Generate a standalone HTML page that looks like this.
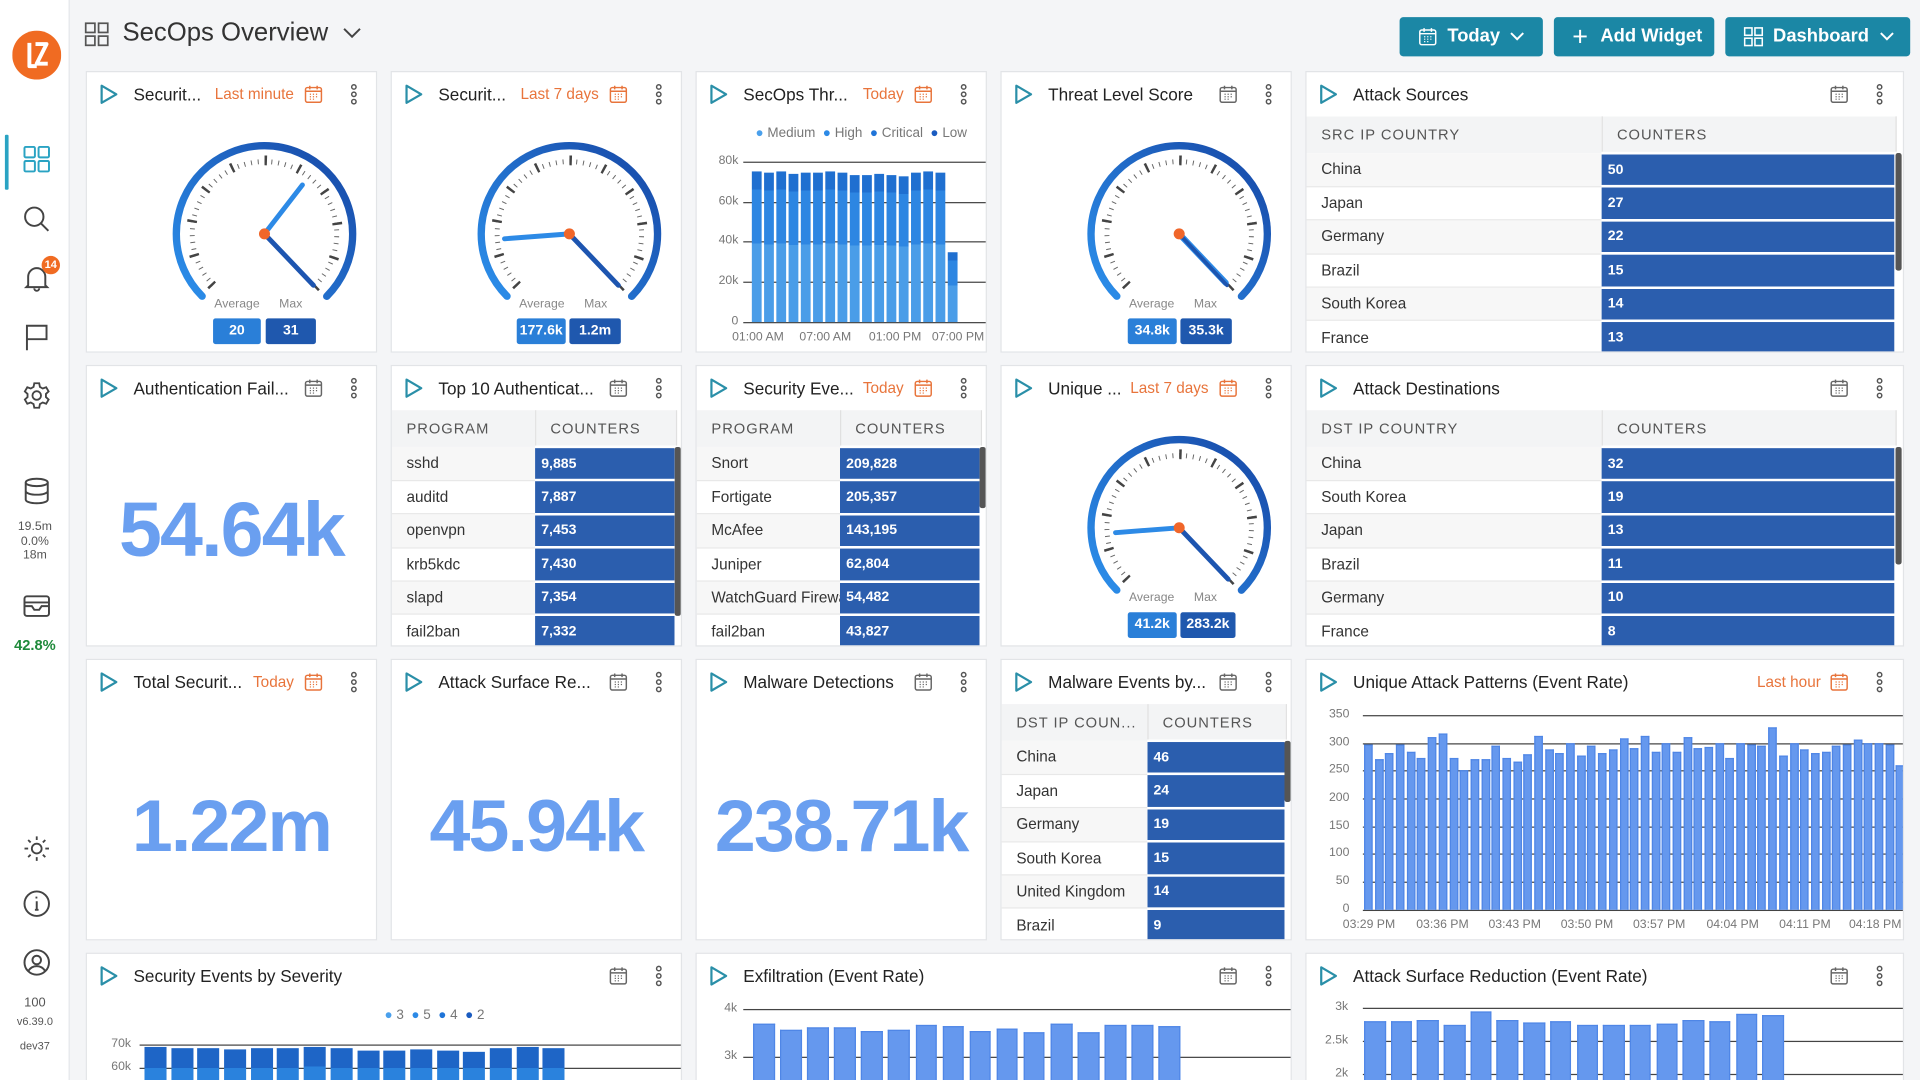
<!DOCTYPE html>
<html><head><meta charset="utf-8">
<style>
*{box-sizing:border-box;margin:0;padding:0}
html,body{width:1920px;height:1080px;overflow:hidden;background:#f4f5f7;font-family:"Liberation Sans",Arial,sans-serif}
#w{position:absolute;left:0;top:0;width:1568px;height:882px;transform:scale(1.2244898);transform-origin:0 0;overflow:hidden;background:#f4f5f7}
.side{position:absolute;left:0;top:0;width:57px;height:882px;background:#fff;border-right:1px solid #e4e6e9}
.ic{position:absolute;left:18px;width:24px;height:24px}
.st{position:absolute;left:0;width:57px;text-align:center;font-size:10px;color:#555}
.card{position:absolute;background:#fff;border:1px solid #e2e4e7;overflow:hidden}
.play{position:absolute;left:10px;top:9px}
.t{position:absolute;left:38px;top:10px;font-size:14px;color:#222;white-space:nowrap}
.tm{position:absolute;top:11px;font-size:12.5px;color:#e8743b;white-space:nowrap}
.cal{position:absolute;top:10px;width:16px;height:16px}
.keb{position:absolute;top:9px;width:6px;height:18px}
.btn{position:absolute;top:14px;height:32px;background:#1b87a5;border-radius:3px;color:#fff;font-weight:bold;font-size:15px;line-height:32px}
table{border-collapse:collapse;position:absolute;left:0;top:36px;table-layout:fixed}
th{height:30px;background:#f3f4f5;color:#555;font-weight:normal;font-size:12px;letter-spacing:.8px;text-align:left;padding-left:12px;white-space:nowrap;overflow:hidden;border-right:1px solid #e0e0e0}
td{height:27.4px;font-size:12.5px;color:#333;padding-left:12px;white-space:nowrap;overflow:hidden;border-bottom:1px solid #e8e8e8}
tr:nth-child(even) td{background:#f7f7f7}
td.v{background:#2b5eae!important;color:#fff;font-weight:bold;font-size:11.5px;padding-left:5px;border:2px solid #fff;border-left:0;border-right:3px solid #fff}
.sb{position:absolute;width:5px;background:#555;border-radius:2px}
.big{position:absolute;left:0;width:100%;text-align:center;font-weight:bold;color:#6a9ff0;letter-spacing:-1.5px}
.lbl{position:absolute;font-size:10px;color:#888}
.bd{position:absolute;height:21px;line-height:21px;color:#fff;font-weight:bold;font-size:11.5px;text-align:center;border-radius:2px}
.gl{position:absolute;height:1px;background:#444}
.ax{position:absolute;font-size:10px;color:#777;text-align:right}
.bars{position:absolute;display:flex;align-items:flex-end}
.bars i{display:block;background:#6598ee;border:1px solid #4f86e6;border-bottom:0}
.sk i{background:linear-gradient(to bottom,#1f6fd0 0,#1f6fd0 12%,#2d86e2 12%,#2d86e2 48%,#4a9de8 48%);border:0}
</style></head><body><div id="w">
<svg width="0" height="0" style="position:absolute">
<defs>
<linearGradient id="ag" x1="0" x2="1" y1="0" y2="0"><stop offset="0" stop-color="#1a52b0"/><stop offset="1" stop-color="#2a8ae6"/></linearGradient>
<symbol id="play" viewBox="0 0 16 18"><path d="M2 2 L14 9 L2 16 Z" fill="none" stroke="#2a8fa8" stroke-width="1.8" stroke-linejoin="round"/></symbol>
<symbol id="calg" viewBox="0 0 16 16"><rect x="1.5" y="2.5" width="13" height="12" rx="1.5" fill="none" stroke="#666" stroke-width="1.2"/><path d="M1.5 5.5h13M5 1v3M11 1v3" stroke="#666" stroke-width="1.2"/><path d="M5 8h1M7.5 8h1M10 8h1M5 10h1M7.5 10h1M10 10h1M5 12h1M7.5 12h1" stroke="#666" stroke-width="1"/></symbol>
<symbol id="calw" viewBox="0 0 16 16"><rect x="1.5" y="2.5" width="13" height="12" rx="1.5" fill="none" stroke="#fff" stroke-width="1.2"/><path d="M1.5 5.5h13M5 1v3M11 1v3" stroke="#fff" stroke-width="1.2"/><path d="M5 8h1M7.5 8h1M10 8h1M5 10h1M7.5 10h1M10 10h1M5 12h1M7.5 12h1" stroke="#fff" stroke-width="1"/></symbol>
<symbol id="calo" viewBox="0 0 16 16"><rect x="1.5" y="2.5" width="13" height="12" rx="1.5" fill="none" stroke="#e8743b" stroke-width="1.2"/><path d="M1.5 5.5h13M5 1v3M11 1v3" stroke="#e8743b" stroke-width="1.2"/><path d="M5 8h1M7.5 8h1M10 8h1M5 10h1M7.5 10h1M10 10h1M5 12h1M7.5 12h1" stroke="#e8743b" stroke-width="1"/></symbol>
<symbol id="keb" viewBox="0 0 6 18"><circle cx="3" cy="3" r="1.8" fill="none" stroke="#555" stroke-width="1.2"/><circle cx="3" cy="9" r="1.8" fill="none" stroke="#555" stroke-width="1.2"/><circle cx="3" cy="15" r="1.8" fill="none" stroke="#555" stroke-width="1.2"/></symbol>
<g id="dial">
<circle r="72" fill="none" stroke="url(#ag)" stroke-width="6" stroke-linecap="round" stroke-dasharray="339.3 200" transform="rotate(135)"/>
<circle r="59" fill="none" stroke="#666" stroke-width="4" stroke-dasharray="0.8 4.76" transform="rotate(135)"/>
<circle r="60" fill="none" stroke="#444" stroke-width="8" stroke-dasharray="2 26.27" transform="rotate(135)"/>
<polygon points="0,0 43,47 43,80 -43,80 -43,47" fill="#fff"/>
</g>
</defs></svg>

<!-- sidebar -->
<div class="side">
<svg style="position:absolute;left:10px;top:25px" width="40" height="40" viewBox="0 0 40 40"><circle cx="20" cy="20" r="20" fill="#f06b22"/><path d="M14 10v19h6M19 11h9l-8 16h9" fill="none" stroke="#fff" stroke-width="3.2" stroke-linejoin="round"/></svg>
<div style="position:absolute;left:4px;top:110px;width:3px;height:45px;background:#2aa3c3;border-radius:1px"></div>
<svg class="ic" style="top:118px" viewBox="0 0 24 24" fill="none" stroke="#2aa3c3" stroke-width="1.6"><rect x="2" y="2" width="8.5" height="8.5" rx="1"/><rect x="13.5" y="2" width="8.5" height="8.5" rx="1"/><rect x="2" y="13.5" width="8.5" height="8.5" rx="1"/><rect x="13.5" y="13.5" width="8.5" height="8.5" rx="1"/></svg>
<svg class="ic" style="top:167px" viewBox="0 0 24 24" fill="none" stroke="#444" stroke-width="1.6"><circle cx="10" cy="10" r="7.5"/><path d="M15.5 15.5l6 6"/></svg>
<svg class="ic" style="top:215px" viewBox="0 0 24 24" fill="none" stroke="#444" stroke-width="1.6"><path d="M5 18V11a7 7 0 0 1 14 0v7l1.5 1.5h-17z M10 20.5a2 2 0 0 0 4 0"/></svg>
<div style="position:absolute;left:34px;top:209px;width:15px;height:15px;border-radius:50%;background:#f06b22;color:#fff;font-size:9px;font-weight:bold;text-align:center;line-height:15px">14</div>
<svg class="ic" style="top:263px" viewBox="0 0 24 24" fill="none" stroke="#444" stroke-width="1.6"><path d="M4 23V3h16v11H4"/></svg>
<svg class="ic" style="top:311px" viewBox="0 0 24 24" fill="none" stroke="#444" stroke-width="1.5"><circle cx="12" cy="12" r="3.5"/><path d="M10 2h4l.6 3 2.3 1.3 2.8-1 2 3.4-2.2 2v2.6l2.2 2-2 3.4-2.8-1-2.3 1.3-.6 3h-4l-.6-3-2.3-1.3-2.8 1-2-3.4 2.2-2v-2.6l-2.2-2 2-3.4 2.8 1L9.4 5z"/></svg>
<svg class="ic" style="top:389px" viewBox="0 0 24 24" fill="none" stroke="#444" stroke-width="1.6"><ellipse cx="12" cy="5" rx="9" ry="3"/><path d="M3 5v14c0 1.7 4 3 9 3s9-1.3 9-3V5M3 12c0 1.7 4 3 9 3s9-1.3 9-3"/></svg>
<div class="st" style="top:425px;line-height:11.5px">19.5m<br>0.0%<br>18m</div>
<svg class="ic" style="top:483px" viewBox="0 0 24 24" fill="none" stroke="#444" stroke-width="1.6"><rect x="2" y="4" width="20" height="16" rx="2"/><path d="M2 9h20M2 12h6l2 3h4l2-3h6"/></svg>
<div class="st" style="top:520px;font-size:12px;font-weight:bold;color:#1f8a3b">42.8%</div>
<svg class="ic" style="top:681px" viewBox="0 0 24 24" fill="none" stroke="#444" stroke-width="1.5"><circle cx="12" cy="12" r="4"/><path d="M12 2v3M12 19v3M2 12h3M19 12h3M5 5l2 2M17 17l2 2M5 19l2-2M17 7l2-2"/></svg>
<svg class="ic" style="top:726px" viewBox="0 0 24 24" fill="none" stroke="#444" stroke-width="1.6"><circle cx="12" cy="12" r="10"/><path d="M12 10v7M10.5 17h3M11 7h1.5"/></svg>
<svg class="ic" style="top:774px" viewBox="0 0 24 24" fill="none" stroke="#444" stroke-width="1.6"><circle cx="12" cy="12" r="10"/><circle cx="12" cy="10" r="3.5"/><path d="M5 19c2-3 4-4 7-4s5 1 7 4"/></svg>
<div class="st" style="top:813px;font-size:10.5px">100</div>
<div class="st" style="top:829px;font-size:9px">v6.39.0</div>
<div class="st" style="top:849px;font-size:9px">dev37</div>
</div>

<!-- header -->
<svg style="position:absolute;left:69px;top:18px" width="20" height="20" viewBox="0 0 20 20" fill="none" stroke="#555" stroke-width="1.4"><rect x="1" y="1" width="7.5" height="7.5"/><rect x="11.5" y="1" width="7.5" height="7.5"/><rect x="1" y="11.5" width="7.5" height="7.5"/><rect x="11.5" y="11.5" width="7.5" height="7.5"/></svg>
<div style="position:absolute;left:100px;top:15px;font-size:21px;color:#333">SecOps Overview</div>
<svg style="position:absolute;left:280px;top:22px" width="15" height="10" viewBox="0 0 15 10"><path d="M1 1.5l6.5 6.5 6.5-6.5" fill="none" stroke="#444" stroke-width="1.6"/></svg>

<div class="btn" style="left:1143px;width:117px"><svg style="position:absolute;left:15px;top:8px" width="16" height="16"><use href="#calw"/></svg><span style="position:absolute;left:39px">Today</span><svg style="position:absolute;left:90px;top:12px" width="12" height="8"><path d="M1 1l5 5 5-5" fill="none" stroke="#fff" stroke-width="1.6"/></svg></div>
<div class="btn" style="left:1269px;width:131px"><span style="position:absolute;left:15px;font-weight:normal;font-size:22px">+</span><span style="position:absolute;left:38px">Add Widget</span></div>
<div class="btn" style="left:1409px;width:151px"><svg style="position:absolute;left:15px;top:8px" width="16" height="16" viewBox="0 0 20 20" fill="none" stroke="#fff" stroke-width="1.6"><rect x="1" y="1" width="7.5" height="7.5"/><rect x="11.5" y="1" width="7.5" height="7.5"/><rect x="1" y="11.5" width="7.5" height="7.5"/><rect x="11.5" y="11.5" width="7.5" height="7.5"/></svg><span style="position:absolute;left:39px">Dashboard</span><svg style="position:absolute;left:126px;top:12px" width="12" height="8"><path d="M1 1l5 5 5-5" fill="none" stroke="#fff" stroke-width="1.6"/></svg></div>

<!-- ROW 1 -->
<div class="card" style="left:70px;top:58px;width:238px;height:230px">
<svg class="play" width="16" height="18"><use href="#play"/></svg><span class="t">Securit...</span><span class="tm" style="right:67px">Last minute</span>
<svg class="cal" style="right:43px"><use href="#calo"/></svg><svg class="keb" style="right:15px"><use href="#keb"/></svg>
<svg style="position:absolute;left:65px;top:52px" width="160" height="160" viewBox="-80 -80 160 160"><use href="#dial"/><line x1="0" y1="0" x2="31" y2="-40" stroke="#2d8ae6" stroke-width="4" stroke-linecap="round"/><line x1="0" y1="0" x2="40" y2="42" stroke="#1d55b0" stroke-width="4" stroke-linecap="round"/><circle r="4.5" fill="#f0662a"/></svg>
<span class="lbl" style="left:104px;top:184px">Average</span><span class="lbl" style="left:157px;top:184px">Max</span>
<div class="bd" style="left:103px;top:201px;width:39px;background:#2a7fd8">20</div><div class="bd" style="left:146px;top:201px;width:41px;background:#1f58ae">31</div>
</div>

<div class="card" style="left:319px;top:58px;width:238px;height:230px">
<svg class="play" width="16" height="18"><use href="#play"/></svg><span class="t">Securit...</span><span class="tm" style="right:67px">Last 7 days</span>
<svg class="cal" style="right:43px"><use href="#calo"/></svg><svg class="keb" style="right:15px"><use href="#keb"/></svg>
<svg style="position:absolute;left:65px;top:52px" width="160" height="160" viewBox="-80 -80 160 160"><use href="#dial"/><line x1="0" y1="0" x2="-53" y2="4" stroke="#2d8ae6" stroke-width="4" stroke-linecap="round"/><line x1="0" y1="0" x2="40" y2="42" stroke="#1d55b0" stroke-width="4" stroke-linecap="round"/><circle r="4.5" fill="#f0662a"/></svg>
<span class="lbl" style="left:104px;top:184px">Average</span><span class="lbl" style="left:157px;top:184px">Max</span>
<div class="bd" style="left:102px;top:201px;width:40px;background:#2a7fd8">177.6k</div><div class="bd" style="left:145px;top:201px;width:42px;background:#1f58ae">1.2m</div>
</div>

<div class="card" style="left:568px;top:58px;width:238px;height:230px">
<svg class="play" width="16" height="18"><use href="#play"/></svg><span class="t">SecOps Thr...</span><span class="tm" style="right:67px">Today</span>
<svg class="cal" style="right:43px"><use href="#calo"/></svg><svg class="keb" style="right:15px"><use href="#keb"/></svg>
<div style="position:absolute;left:48px;top:44px;font-size:11px;color:#777;white-space:nowrap"><span style="color:#4aa0ec">●</span> Medium &nbsp;<span style="color:#2c8ae6">●</span> High &nbsp;<span style="color:#1f74d8">●</span> Critical &nbsp;<span style="color:#1a5bc0">●</span> Low</div>
<div class="gl" style="left:38px;top:73px;width:200px"></div><div class="gl" style="left:38px;top:106px;width:200px"></div><div class="gl" style="left:38px;top:138px;width:200px"></div><div class="gl" style="left:38px;top:171px;width:200px"></div><div class="gl" style="left:38px;top:204px;width:200px"></div>
<div class="ax" style="left:0;width:34px;top:67px">80k</div><div class="ax" style="left:0;width:34px;top:100px">60k</div><div class="ax" style="left:0;width:34px;top:132px">40k</div><div class="ax" style="left:0;width:34px;top:165px">20k</div><div class="ax" style="left:0;width:34px;top:198px">0</div>
<div class="bars sk" style="left:45px;top:70px;height:134px;gap:2.1px">
<i style="width:7.9px;height:123px"></i><i style="width:7.9px;height:122px"></i><i style="width:7.9px;height:123px"></i><i style="width:7.9px;height:121px"></i><i style="width:7.9px;height:122px"></i><i style="width:7.9px;height:122px"></i><i style="width:7.9px;height:123px"></i><i style="width:7.9px;height:122px"></i><i style="width:7.9px;height:120px"></i><i style="width:7.9px;height:120px"></i><i style="width:7.9px;height:121px"></i><i style="width:7.9px;height:120px"></i><i style="width:7.9px;height:119px"></i><i style="width:7.9px;height:122px"></i><i style="width:7.9px;height:123px"></i><i style="width:7.9px;height:122px"></i><i style="width:7.9px;height:57px"></i>
</div>
<div class="ax" style="left:20px;width:60px;text-align:center;top:211px">01:00 AM</div><div class="ax" style="left:75px;width:60px;text-align:center;top:211px">07:00 AM</div><div class="ax" style="left:132px;width:60px;text-align:center;top:211px">01:00 PM</div><div class="ax" style="left:192px;width:60px;text-align:left;top:211px">07:00 PM</div>
</div>

<div class="card" style="left:817px;top:58px;width:238px;height:230px">
<svg class="play" width="16" height="18"><use href="#play"/></svg><span class="t">Threat Level Score</span>
<svg class="cal" style="right:43px"><use href="#calg"/></svg><svg class="keb" style="right:15px"><use href="#keb"/></svg>
<svg style="position:absolute;left:65px;top:52px" width="160" height="160" viewBox="-80 -80 160 160"><use href="#dial"/><line x1="0" y1="0" x2="38" y2="40" stroke="#2d8ae6" stroke-width="5" stroke-linecap="round"/><line x1="0" y1="0" x2="39" y2="42" stroke="#1d55b0" stroke-width="3" stroke-linecap="round"/><circle r="4.5" fill="#f0662a"/></svg>
<span class="lbl" style="left:104px;top:184px">Average</span><span class="lbl" style="left:157px;top:184px">Max</span>
<div class="bd" style="left:103px;top:201px;width:40px;background:#2a7fd8">34.8k</div><div class="bd" style="left:146px;top:201px;width:42px;background:#1f58ae">35.3k</div>
</div>

<div class="card" style="left:1066px;top:58px;width:489px;height:230px">
<svg class="play" width="16" height="18"><use href="#play"/></svg><span class="t">Attack Sources</span>
<svg class="cal" style="right:44px"><use href="#calg"/></svg><svg class="keb" style="right:16px"><use href="#keb"/></svg>
<table style="width:481px"><colgroup><col style="width:241px"><col style="width:240px"></colgroup>
<tr><th>SRC IP COUNTRY</th><th>COUNTERS</th></tr>
<tr><td>China</td><td class="v">50</td></tr><tr><td>Japan</td><td class="v">27</td></tr><tr><td>Germany</td><td class="v">22</td></tr><tr><td>Brazil</td><td class="v">15</td></tr><tr><td>South Korea</td><td class="v">14</td></tr><tr><td>France</td><td class="v">13</td></tr></table>
<div class="sb" style="left:481px;top:66px;height:96px"></div>
</div>

<!-- ROW 2 -->
<div class="card" style="left:70px;top:298px;width:238px;height:230px">
<svg class="play" width="16" height="18"><use href="#play"/></svg><span class="t">Authentication Fail...</span>
<svg class="cal" style="right:43px"><use href="#calg"/></svg><svg class="keb" style="right:15px"><use href="#keb"/></svg>
<div class="big" style="top:98px;font-size:63px">54.64k</div>
</div>

<div class="card" style="left:319px;top:298px;width:238px;height:230px">
<svg class="play" width="16" height="18"><use href="#play"/></svg><span class="t">Top 10 Authenticat...</span>
<svg class="cal" style="right:43px"><use href="#calg"/></svg><svg class="keb" style="right:15px"><use href="#keb"/></svg>
<table style="width:232px"><colgroup><col style="width:117px"><col style="width:115px"></colgroup>
<tr><th>PROGRAM</th><th>COUNTERS</th></tr>
<tr><td>sshd</td><td class="v">9,885</td></tr><tr><td>auditd</td><td class="v">7,887</td></tr><tr><td>openvpn</td><td class="v">7,453</td></tr><tr><td>krb5kdc</td><td class="v">7,430</td></tr><tr><td>slapd</td><td class="v">7,354</td></tr><tr><td>fail2ban</td><td class="v">7,332</td></tr></table>
<div class="sb" style="left:231px;top:66px;height:138px"></div>
</div>

<div class="card" style="left:568px;top:298px;width:238px;height:230px">
<svg class="play" width="16" height="18"><use href="#play"/></svg><span class="t">Security Eve...</span><span class="tm" style="right:67px">Today</span>
<svg class="cal" style="right:43px"><use href="#calo"/></svg><svg class="keb" style="right:15px"><use href="#keb"/></svg>
<table style="width:232px"><colgroup><col style="width:117px"><col style="width:115px"></colgroup>
<tr><th>PROGRAM</th><th>COUNTERS</th></tr>
<tr><td>Snort</td><td class="v">209,828</td></tr><tr><td>Fortigate</td><td class="v">205,357</td></tr><tr><td>McAfee</td><td class="v">143,195</td></tr><tr><td>Juniper</td><td class="v">62,804</td></tr><tr><td>WatchGuard Firewall</td><td class="v">54,482</td></tr><tr><td>fail2ban</td><td class="v">43,827</td></tr></table>
<div class="sb" style="left:231px;top:66px;height:50px"></div>
</div>

<div class="card" style="left:817px;top:298px;width:238px;height:230px">
<svg class="play" width="16" height="18"><use href="#play"/></svg><span class="t">Unique ...</span><span class="tm" style="right:67px">Last 7 days</span>
<svg class="cal" style="right:43px"><use href="#calo"/></svg><svg class="keb" style="right:15px"><use href="#keb"/></svg>
<svg style="position:absolute;left:65px;top:52px" width="160" height="160" viewBox="-80 -80 160 160"><use href="#dial"/><line x1="0" y1="0" x2="-52" y2="4" stroke="#2d8ae6" stroke-width="4" stroke-linecap="round"/><line x1="0" y1="0" x2="40" y2="42" stroke="#1d55b0" stroke-width="4" stroke-linecap="round"/><circle r="4.5" fill="#f0662a"/></svg>
<span class="lbl" style="left:104px;top:184px">Average</span><span class="lbl" style="left:157px;top:184px">Max</span>
<div class="bd" style="left:103px;top:201px;width:40px;background:#2a7fd8">41.2k</div><div class="bd" style="left:146px;top:201px;width:45px;background:#1f58ae">283.2k</div>
</div>

<div class="card" style="left:1066px;top:298px;width:489px;height:230px">
<svg class="play" width="16" height="18"><use href="#play"/></svg><span class="t">Attack Destinations</span>
<svg class="cal" style="right:44px"><use href="#calg"/></svg><svg class="keb" style="right:16px"><use href="#keb"/></svg>
<table style="width:481px"><colgroup><col style="width:241px"><col style="width:240px"></colgroup>
<tr><th>DST IP COUNTRY</th><th>COUNTERS</th></tr>
<tr><td>China</td><td class="v">32</td></tr><tr><td>South Korea</td><td class="v">19</td></tr><tr><td>Japan</td><td class="v">13</td></tr><tr><td>Brazil</td><td class="v">11</td></tr><tr><td>Germany</td><td class="v">10</td></tr><tr><td>France</td><td class="v">8</td></tr></table>
<div class="sb" style="left:481px;top:66px;height:96px"></div>
</div>

<!-- ROW 3 -->
<div class="card" style="left:70px;top:538px;width:238px;height:230px">
<svg class="play" width="16" height="18"><use href="#play"/></svg><span class="t">Total Securit...</span><span class="tm" style="right:67px">Today</span>
<svg class="cal" style="right:43px"><use href="#calo"/></svg><svg class="keb" style="right:15px"><use href="#keb"/></svg>
<div class="big" style="top:101px;font-size:60px">1.22m</div>
</div>

<div class="card" style="left:319px;top:538px;width:238px;height:230px">
<svg class="play" width="16" height="18"><use href="#play"/></svg><span class="t">Attack Surface Re...</span>
<svg class="cal" style="right:43px"><use href="#calg"/></svg><svg class="keb" style="right:15px"><use href="#keb"/></svg>
<div class="big" style="top:101px;font-size:60px">45.94k</div>
</div>

<div class="card" style="left:568px;top:538px;width:238px;height:230px">
<svg class="play" width="16" height="18"><use href="#play"/></svg><span class="t">Malware Detections</span>
<svg class="cal" style="right:43px"><use href="#calg"/></svg><svg class="keb" style="right:15px"><use href="#keb"/></svg>
<div class="big" style="top:101px;font-size:60px">238.71k</div>
</div>

<div class="card" style="left:817px;top:538px;width:238px;height:230px">
<svg class="play" width="16" height="18"><use href="#play"/></svg><span class="t">Malware Events by...</span>
<svg class="cal" style="right:43px"><use href="#calg"/></svg><svg class="keb" style="right:15px"><use href="#keb"/></svg>
<table style="width:232px"><colgroup><col style="width:119px"><col style="width:113px"></colgroup>
<tr><th>DST IP COUN...</th><th>COUNTERS</th></tr>
<tr><td>China</td><td class="v">46</td></tr><tr><td>Japan</td><td class="v">24</td></tr><tr><td>Germany</td><td class="v">19</td></tr><tr><td>South Korea</td><td class="v">15</td></tr><tr><td>United Kingdom</td><td class="v">14</td></tr><tr><td>Brazil</td><td class="v">9</td></tr></table>
<div class="sb" style="left:231px;top:66px;height:50px"></div>
</div>

<div class="card" style="left:1066px;top:538px;width:489px;height:230px">
<svg class="play" width="16" height="18"><use href="#play"/></svg><span class="t">Unique Attack Patterns (Event Rate)</span><span class="tm" style="right:67px">Last hour</span>
<svg class="cal" style="right:44px"><use href="#calo"/></svg><svg class="keb" style="right:16px"><use href="#keb"/></svg>
<div class="gl" style="left:46px;top:45px;width:443px"></div><div class="gl" style="left:46px;top:68px;width:443px"></div><div class="gl" style="left:46px;top:90px;width:443px"></div><div class="gl" style="left:46px;top:113px;width:443px"></div><div class="gl" style="left:46px;top:136px;width:443px"></div><div class="gl" style="left:46px;top:158px;width:443px"></div><div class="gl" style="left:46px;top:181px;width:443px"></div><div class="gl" style="left:46px;top:204px;width:443px"></div>
<div class="ax" style="left:0;width:35px;top:39px">350</div><div class="ax" style="left:0;width:35px;top:62px">300</div><div class="ax" style="left:0;width:35px;top:84px">250</div><div class="ax" style="left:0;width:35px;top:107px">200</div><div class="ax" style="left:0;width:35px;top:130px">150</div><div class="ax" style="left:0;width:35px;top:152px">100</div><div class="ax" style="left:0;width:35px;top:175px">50</div><div class="ax" style="left:0;width:35px;top:198px">0</div>
<div class="bars" style="left:47px;top:40px;height:164px;gap:1.7px">
<i style="width:7px;height:135px"></i><i style="width:7px;height:123px"></i><i style="width:7px;height:128px"></i><i style="width:7px;height:135px"></i><i style="width:7px;height:129px"></i><i style="width:7px;height:124px"></i><i style="width:7px;height:141px"></i><i style="width:7px;height:144px"></i><i style="width:7px;height:124px"></i><i style="width:7px;height:114px"></i><i style="width:7px;height:123px"></i><i style="width:7px;height:123px"></i><i style="width:7px;height:134px"></i><i style="width:7px;height:124px"></i><i style="width:7px;height:121px"></i><i style="width:7px;height:127px"></i><i style="width:7px;height:142px"></i><i style="width:7px;height:131px"></i><i style="width:7px;height:128px"></i><i style="width:7px;height:136px"></i><i style="width:7px;height:126px"></i><i style="width:7px;height:134px"></i><i style="width:7px;height:128px"></i><i style="width:7px;height:131px"></i><i style="width:7px;height:140px"></i><i style="width:7px;height:132px"></i><i style="width:7px;height:142px"></i><i style="width:7px;height:129px"></i><i style="width:7px;height:136px"></i><i style="width:7px;height:129px"></i><i style="width:7px;height:141px"></i><i style="width:7px;height:132px"></i><i style="width:7px;height:133px"></i><i style="width:7px;height:136px"></i><i style="width:7px;height:124px"></i><i style="width:7px;height:136px"></i><i style="width:7px;height:135px"></i><i style="width:7px;height:134px"></i><i style="width:7px;height:149px"></i><i style="width:7px;height:126px"></i><i style="width:7px;height:136px"></i><i style="width:7px;height:131px"></i><i style="width:7px;height:128px"></i><i style="width:7px;height:129px"></i><i style="width:7px;height:134px"></i><i style="width:7px;height:135px"></i><i style="width:7px;height:139px"></i><i style="width:7px;height:136px"></i><i style="width:7px;height:136px"></i><i style="width:7px;height:135px"></i><i style="width:7px;height:118px"></i>
</div>
<div class="ax" style="left:26px;width:50px;text-align:center;top:211px">03:29 PM</div><div class="ax" style="left:86px;width:50px;text-align:center;top:211px">03:36 PM</div><div class="ax" style="left:145px;width:50px;text-align:center;top:211px">03:43 PM</div><div class="ax" style="left:204px;width:50px;text-align:center;top:211px">03:50 PM</div><div class="ax" style="left:263px;width:50px;text-align:center;top:211px">03:57 PM</div><div class="ax" style="left:323px;width:50px;text-align:center;top:211px">04:04 PM</div><div class="ax" style="left:382px;width:50px;text-align:center;top:211px">04:11 PM</div><div class="ax" style="left:443px;width:50px;text-align:left;top:211px">04:18 PM</div>
</div>

<!-- ROW 4 -->
<div class="card" style="left:70px;top:778px;width:487px;height:120px">
<svg class="play" width="16" height="18"><use href="#play"/></svg><span class="t">Security Events by Severity</span>
<svg class="cal" style="right:43px"><use href="#calg"/></svg><svg class="keb" style="right:15px"><use href="#keb"/></svg>
<div style="position:absolute;left:243px;top:44px;font-size:11px;color:#777;white-space:nowrap"><span style="color:#4aa0ec">●</span> 3 &nbsp;<span style="color:#2c8ae6">●</span> 5 &nbsp;<span style="color:#1f74d8">●</span> 4 &nbsp;<span style="color:#1a5bc0">●</span> 2</div>
<div class="gl" style="left:43px;top:74px;width:444px"></div><div class="gl" style="left:43px;top:93px;width:444px"></div>
<div class="bars" style="left:47px;top:70px;height:60px;gap:3.7px;align-items:flex-start">
<i style="width:18px;height:60px;margin-top:6px;background:linear-gradient(#1e65c6 0,#1e65c6 17px,#2a82dd 17px);border:0"></i><i style="width:18px;height:60px;margin-top:7px;background:linear-gradient(#1e65c6 0,#1e65c6 16px,#2a82dd 16px);border:0"></i><i style="width:18px;height:60px;margin-top:7px;background:linear-gradient(#1e65c6 0,#1e65c6 16px,#2a82dd 16px);border:0"></i><i style="width:18px;height:60px;margin-top:8px;background:linear-gradient(#1e65c6 0,#1e65c6 15px,#2a82dd 15px);border:0"></i><i style="width:18px;height:60px;margin-top:7px;background:linear-gradient(#1e65c6 0,#1e65c6 16px,#2a82dd 16px);border:0"></i><i style="width:18px;height:60px;margin-top:7px;background:linear-gradient(#1e65c6 0,#1e65c6 16px,#2a82dd 16px);border:0"></i><i style="width:18px;height:60px;margin-top:6px;background:linear-gradient(#1e65c6 0,#1e65c6 16px,#2a82dd 16px);border:0"></i><i style="width:18px;height:60px;margin-top:7px;background:linear-gradient(#1e65c6 0,#1e65c6 16px,#2a82dd 16px);border:0"></i><i style="width:18px;height:60px;margin-top:9px;background:linear-gradient(#1e65c6 0,#1e65c6 14px,#2a82dd 14px);border:0"></i><i style="width:18px;height:60px;margin-top:9px;background:linear-gradient(#1e65c6 0,#1e65c6 14px,#2a82dd 14px);border:0"></i><i style="width:18px;height:60px;margin-top:8px;background:linear-gradient(#1e65c6 0,#1e65c6 15px,#2a82dd 15px);border:0"></i><i style="width:18px;height:60px;margin-top:9px;background:linear-gradient(#1e65c6 0,#1e65c6 14px,#2a82dd 14px);border:0"></i><i style="width:18px;height:60px;margin-top:10px;background:linear-gradient(#1e65c6 0,#1e65c6 13px,#2a82dd 13px);border:0"></i><i style="width:18px;height:60px;margin-top:7px;background:linear-gradient(#1e65c6 0,#1e65c6 16px,#2a82dd 16px);border:0"></i><i style="width:18px;height:60px;margin-top:6px;background:linear-gradient(#1e65c6 0,#1e65c6 17px,#2a82dd 17px);border:0"></i><i style="width:18px;height:60px;margin-top:7px;background:linear-gradient(#1e65c6 0,#1e65c6 16px,#2a82dd 16px);border:0"></i>
</div>
<div class="ax" style="left:0;width:36px;top:68px;background:#fff">70k</div><div class="ax" style="left:0;width:36px;top:87px;background:#fff">60k</div>
</div>

<div class="card" style="left:568px;top:778px;width:487px;height:120px">
<svg class="play" width="16" height="18"><use href="#play"/></svg><span class="t">Exfiltration (Event Rate)</span>
<svg class="cal" style="right:43px"><use href="#calg"/></svg><svg class="keb" style="right:15px"><use href="#keb"/></svg>
<div class="gl" style="left:38px;top:45px;width:449px"></div><div class="gl" style="left:38px;top:84px;width:449px"></div>
<div class="ax" style="left:0;width:33px;top:39px">4k</div><div class="ax" style="left:0;width:33px;top:78px">3k</div>
<div class="bars" style="left:46px;top:40px;height:80px;gap:4.6px;align-items:flex-start">
<i style="width:17.5px;height:80px;margin-top:17px"></i><i style="width:17.5px;height:80px;margin-top:22px"></i><i style="width:17.5px;height:80px;margin-top:20px"></i><i style="width:17.5px;height:80px;margin-top:20px"></i><i style="width:17.5px;height:80px;margin-top:23px"></i><i style="width:17.5px;height:80px;margin-top:22px"></i><i style="width:17.5px;height:80px;margin-top:18px"></i><i style="width:17.5px;height:80px;margin-top:19px"></i><i style="width:17.5px;height:80px;margin-top:23px"></i><i style="width:17.5px;height:80px;margin-top:21px"></i><i style="width:17.5px;height:80px;margin-top:24px"></i><i style="width:17.5px;height:80px;margin-top:17px"></i><i style="width:17.5px;height:80px;margin-top:24px"></i><i style="width:17.5px;height:80px;margin-top:18px"></i><i style="width:17.5px;height:80px;margin-top:18px"></i><i style="width:17.5px;height:80px;margin-top:19px"></i>
</div>
</div>

<div class="card" style="left:1066px;top:778px;width:489px;height:120px">
<svg class="play" width="16" height="18"><use href="#play"/></svg><span class="t">Attack Surface Reduction (Event Rate)</span>
<svg class="cal" style="right:44px"><use href="#calg"/></svg><svg class="keb" style="right:16px"><use href="#keb"/></svg>
<div class="gl" style="left:46px;top:44px;width:443px"></div><div class="gl" style="left:46px;top:71px;width:443px"></div><div class="gl" style="left:46px;top:98px;width:443px"></div>
<div class="ax" style="left:0;width:34px;top:38px">3k</div><div class="ax" style="left:0;width:34px;top:65px">2.5k</div><div class="ax" style="left:0;width:34px;top:92px">2k</div>
<div class="bars" style="left:47px;top:40px;height:80px;gap:4.2px;align-items:flex-start">
<i style="width:17.5px;height:80px;margin-top:15px"></i><i style="width:17.5px;height:80px;margin-top:15px"></i><i style="width:17.5px;height:80px;margin-top:14px"></i><i style="width:17.5px;height:80px;margin-top:18px"></i><i style="width:17.5px;height:80px;margin-top:7px"></i><i style="width:17.5px;height:80px;margin-top:14px"></i><i style="width:17.5px;height:80px;margin-top:16px"></i><i style="width:17.5px;height:80px;margin-top:15px"></i><i style="width:17.5px;height:80px;margin-top:18px"></i><i style="width:17.5px;height:80px;margin-top:18px"></i><i style="width:17.5px;height:80px;margin-top:18px"></i><i style="width:17.5px;height:80px;margin-top:17px"></i><i style="width:17.5px;height:80px;margin-top:14px"></i><i style="width:17.5px;height:80px;margin-top:15px"></i><i style="width:17.5px;height:80px;margin-top:9px"></i><i style="width:17.5px;height:80px;margin-top:10px"></i>
</div>
</div>

</div></body></html>
